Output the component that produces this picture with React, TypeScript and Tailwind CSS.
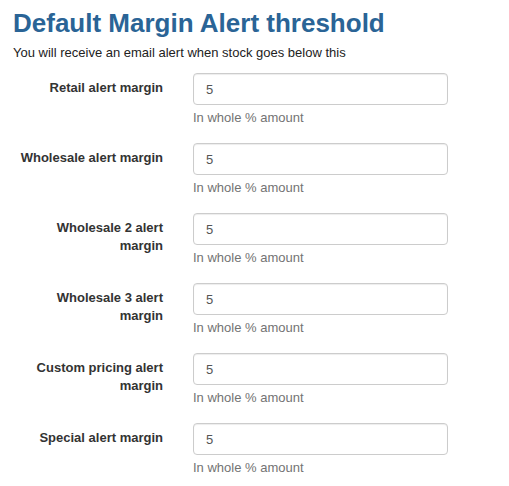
const fields = [
  'Retail alert margin',
  'Wholesale alert margin',
  'Wholesale 2 alert margin',
  'Wholesale 3 alert margin',
  'Custom pricing alert margin',
  'Special alert margin',
]

export default function App() {
  return (
    <div className="min-h-[486px] bg-white px-[13px] font-['Liberation_Sans',Arial,sans-serif] text-[#333]">
      <h2 className="pt-[5px] text-[26px] font-bold leading-[36px] text-[#2a6496]">
        Default Margin Alert threshold
      </h2>
      <p className="mt-[3px] text-[13px] leading-[18px] text-[#222]">
        You will receive an email alert when stock goes below this
      </p>
      <form className="mt-[11px] flex flex-col gap-[18px]">
        {fields.map((label) => (
          <div key={label} className="flex gap-[30px]">
            <label className="w-[150px] shrink-0 pt-[6px] text-right text-[13px] font-bold leading-[18px] text-[#333]">
              {label}
            </label>
            <div className="w-[255px]">
              <input
                type="text"
                defaultValue="5"
                className="block h-[32px] w-full rounded-[4px] border border-[#ccc] px-[12px] text-[13px] text-[#555] shadow-[inset_0_1px_1px_rgba(0,0,0,0.075)] outline-none"
              />
              <p className="mt-[5px] text-[13px] leading-[15px] text-[#737373]">
                In whole % amount
              </p>
            </div>
          </div>
        ))}
      </form>
    </div>
  )
}
